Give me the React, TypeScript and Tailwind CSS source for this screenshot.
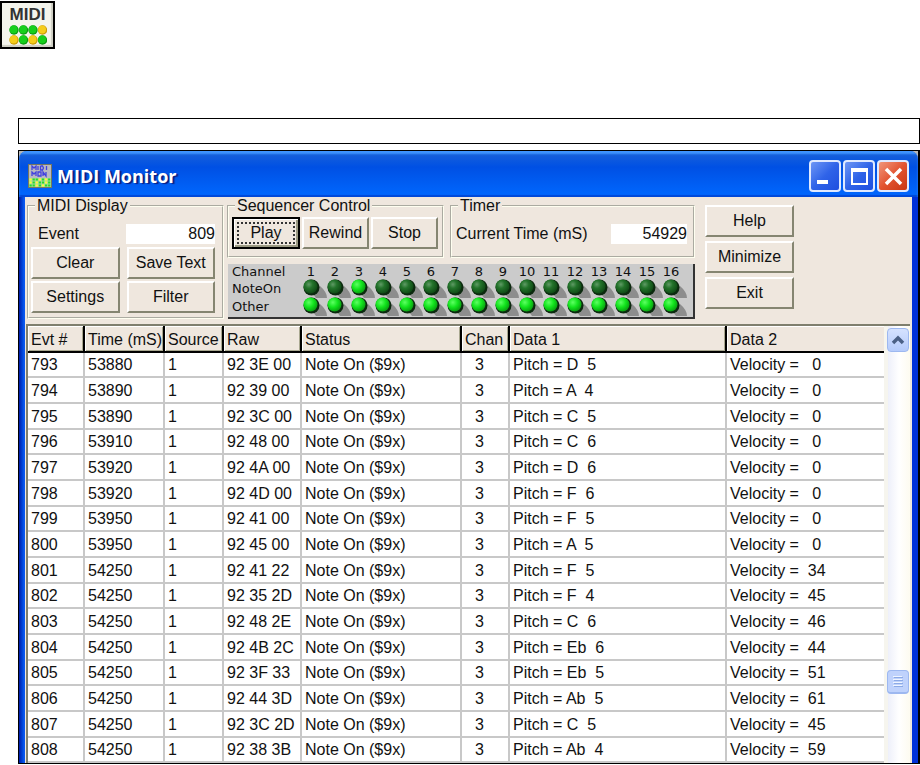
import React from "react";

type Row = [number, number, string, string, string];

const rows: Row[] = [
  [793, 53880, "92 3E 00", "D  5", "  0"],
  [794, 53890, "92 39 00", "A  4", "  0"],
  [795, 53890, "92 3C 00", "C  5", "  0"],
  [796, 53910, "92 48 00", "C  6", "  0"],
  [797, 53920, "92 4A 00", "D  6", "  0"],
  [798, 53920, "92 4D 00", "F  6", "  0"],
  [799, 53950, "92 41 00", "F  5", "  0"],
  [800, 53950, "92 45 00", "A  5", "  0"],
  [801, 54250, "92 41 22", "F  5", " 34"],
  [802, 54250, "92 35 2D", "F  4", " 45"],
  [803, 54250, "92 48 2E", "C  6", " 46"],
  [804, 54250, "92 4B 2C", "Eb  6", " 44"],
  [805, 54250, "92 3F 33", "Eb  5", " 51"],
  [806, 54250, "92 44 3D", "Ab  5", " 61"],
  [807, 54250, "92 3C 2D", "C  5", " 45"],
  [808, 54250, "92 38 3B", "Ab  4", " 59"],
];

const columns = [
  { label: "Evt #", width: "w-[57px]" },
  { label: "Time (mS)", width: "w-[80px]" },
  { label: "Source", width: "w-[59px]" },
  { label: "Raw", width: "w-[78px]" },
  { label: "Status", width: "w-[160px]" },
  { label: "Chan", width: "w-[48px]" },
  { label: "Data 1", width: "w-[217px]" },
  { label: "Data 2", width: "" },
];

const channels = Array.from({ length: 16 }, (_, i) => i + 1);

function PushButton({ children, className = "" }: { children: React.ReactNode; className?: string }) {
  return (
    <button
      type="button"
      className={`h-8 whitespace-nowrap border-2 border-b-[#858571] border-l-white border-r-[#858571] border-t-white bg-[#efe7de] text-center leading-5 ${className}`}
    >
      {children}
    </button>
  );
}

function Group({ title, className, children }: { title: string; className: string; children: React.ReactNode }) {
  return (
    <fieldset className={`min-w-0 border-2 border-[#fffff0] [border-style:groove] ${className}`}>
      <legend className="ml-1.5 px-0.5 leading-4">{title}</legend>
      {children}
    </fieldset>
  );
}

function Led({ lit }: { lit: boolean }) {
  return (
    <svg viewBox="0 0 24 18" className="h-[18px] w-6 overflow-visible" aria-hidden="true">
      <path d="M14 0 L21 6 Q28 12 28 18 L17 18 Q14 13 8 13 Z" fill="#8d8d8d" />
      <circle cx="12.500" cy="7.500" r="8" fill="#0c2a0f" />
      <circle cx="11.500" cy="6.500" r="7" fill={lit ? "url(#led-on)" : "url(#led-off)"} />
    </svg>
  );
}

function LedPanel() {
  return (
    <div className="mt-1.5 ml-px flex h-[55px] flex-col border-b-2 border-r-2 border-b-[#333] border-r-[#333] bg-[#cbcbcb] font-['DejaVu_Sans','Liberation_Sans',sans-serif] text-[13px] font-medium">
      <svg className="absolute h-0 w-0" aria-hidden="true">
        <defs>
          <radialGradient id="led-on" cx="0.38" cy="0.35" r="0.7">
            <stop offset="0" stopColor="#5dff62" />
            <stop offset="0.5" stopColor="#12e41d" />
            <stop offset="1" stopColor="#08990f" />
          </radialGradient>
          <radialGradient id="led-off" cx="0.38" cy="0.35" r="0.7">
            <stop offset="0" stopColor="#5f9a65" />
            <stop offset="0.4" stopColor="#23732b" />
            <stop offset="1" stopColor="#0d4713" />
          </radialGradient>
        </defs>
      </svg>
      <div className="flex h-4 items-center leading-4">
        <span className="w-[71px] pl-1">Channel</span>
        {channels.map((c) => (
          <span key={c} className="w-6 text-center">{c}</span>
        ))}
      </div>
      <div className="flex h-[18px] items-center leading-4">
        <span className="w-[71px] pl-1">NoteOn</span>
        {channels.map((c) => (
          <Led key={c} lit={c === 3} />
        ))}
      </div>
      <div className="flex h-[18px] items-center leading-4">
        <span className="w-[71px] pl-1">Other</span>
        {channels.map((c) => (
          <Led key={c} lit />
        ))}
      </div>
    </div>
  );
}

function AppIcon() {
  const dots = ["g", "g", "g", "y", "y", "g", "y", "g"];
  return (
    <div className="mt-px flex h-12 w-[55px] flex-col items-center border-2 border-black bg-[#f4f4ec] pt-0.5 shadow-[inset_-2px_-2px_1px_#cfcfc4]">
      <span className="font-['Liberation_Sans',sans-serif] text-[17px] font-bold leading-5 text-[#333]">MIDI</span>
      <svg viewBox="0 0 38 20" className="h-5 w-[38px]" aria-hidden="true">
        {dots.map((d, i) => (
          <g key={i}>
            <circle cx={5 + (i % 4) * 9.5} cy={i < 4 ? 5 : 15} r="4.700" fill={d === "g" ? "#0a9a10" : "#c99a06"} />
            <circle cx={4.6 + (i % 4) * 9.5} cy={i < 4 ? 4.5 : 14.5} r="3.900" fill={d === "g" ? "#16cf1c" : "#f5cc1a"} />
          </g>
        ))}
      </svg>
    </div>
  );
}

function TitleIcon() {
  return (
    <svg viewBox="0 0 24 24" className="h-6 w-6" aria-hidden="true">
      <rect width="24" height="24" fill="#77775f" />
      <rect x="1" y="1" width="22" height="22" fill="#b9b9c2" />
      <path d="M4 6V2l2 2 2-2v4M10 2v4M12.500 2v4h2l1-2-1-2h-2M18.500 2v4M4 12V8l2 2 2-2v4M10 8h3v4h-3zM15 12V8l3 4V8" fill="none" stroke="#4141e0" strokeWidth="1.300" />
      <rect x="1" y="14" width="22" height="9" fill="#a8d69a" />
      {[0, 1, 2].map((r) =>
        [0, 1, 2, 3, 4, 5, 6].map((c) => (
          <rect key={`${r}-${c}`} x={1.5 + c * 3.1} y={14.5 + r * 3} width="2.200" height="2" fill={(r + c * 2) % 5 < 2 ? "#ffff35" : "#25dd2b"} />
        )),
      )}
    </svg>
  );
}

const captionButton = "flex h-8 w-8 items-center justify-center rounded border-2 border-[#dfe9ff] text-white";

function TitleBar() {
  return (
    <header className="flex h-[46px] items-center bg-linear-to-b from-[#1b62d8] via-[#0050e4] via-35% to-[#0068ff] pl-[9px] pr-[9px] pt-1 shadow-[inset_0_3px_2px_#3f94ff,inset_0_-2px_1px_#0048d8]">
      <TitleIcon />
      <h1 className="ml-[5px] flex-1 font-['Open_Sans','Noto_Sans',sans-serif] text-lg font-bold text-white [text-shadow:2px_1px_1px_#0a1f80]">
        MIDI Monitor
      </h1>
      <div className="flex gap-0.5">
        <button type="button" aria-label="Minimize window" className={`${captionButton} bg-linear-to-br from-[#6d95f5] via-[#2f63e8] to-[#1f4fe0]`}>
          <svg viewBox="0 0 28 28" className="h-7 w-7"><rect x="6" y="18" width="11" height="4" fill="currentColor" /></svg>
        </button>
        <button type="button" aria-label="Maximize window" className={`${captionButton} bg-linear-to-br from-[#6d95f5] via-[#2f63e8] to-[#1f4fe0]`}>
          <svg viewBox="0 0 28 28" className="h-7 w-7"><path d="M6 6h17v17H6zM8 10v11h13V10z" fillRule="evenodd" fill="currentColor" /></svg>
        </button>
        <button type="button" aria-label="Close window" className={`${captionButton} bg-linear-to-br from-[#f0957a] via-[#e2532f] to-[#c93510]`}>
          <svg viewBox="0 0 28 28" className="h-7 w-7"><path d="M7 7L22 22M22 7L7 22" stroke="currentColor" strokeWidth="3.500" /></svg>
        </button>
      </div>
    </header>
  );
}

function ScrollBar() {
  return (
    <div className="flex w-[26px] shrink-0 flex-col items-center border-l-4 border-[#f6f5ee] bg-linear-to-r from-[#eef0fa] via-white to-[#fdfbf0] pt-0.5">
      <button type="button" aria-label="Scroll up" className="-ml-0.5 flex h-6 w-[22px] items-center justify-center rounded-sm border border-[#9db8f0] bg-linear-to-b from-[#d5e2ff] to-[#b5cbfb]">
        <svg viewBox="0 0 16 16" className="h-4 w-4"><path d="M3 11L8 6L13 11" fill="none" stroke="#4a6086" strokeWidth="3.500" /></svg>
      </button>
      <div className="flex-1" />
      <div className="-ml-0.5 mb-[69px] flex h-6 w-[22px] items-center justify-center rounded-sm border border-b-2 border-[#9db8f0] bg-[#bfd2fc]">
        <svg viewBox="0 0 12 13" className="h-[13px] w-3">
          <path d="M1 1.500h9M1 4.500h9M1 7.500h9M1 10.500h9" stroke="#eef4ff" />
          <path d="M2 2.500h9M2 5.500h9M2 8.500h9M2 11.500h9" stroke="#8caae6" />
        </svg>
      </div>
    </div>
  );
}

const lastCell = "overflow-hidden border-b-2 border-[#c8c8c8] pb-0 pl-[3px] pr-0 pt-px leading-5";
const cell = `${lastCell} border-r-2`;

function EventTable() {
  return (
    <div className="ml-px mr-0.5 flex border-l-2 border-t-2 border-[#7f7f6e] bg-white">
      <table className="min-w-0 flex-1 table-fixed border-separate border-spacing-0 whitespace-pre">
        <thead>
          <tr className="h-[27px]">
            {columns.map((c, i) => (
              <th
                key={c.label}
                scope="col"
                className={`${c.width} overflow-hidden border-b-2 border-black bg-[#efe7de] pb-0 pl-[3px] pr-0 pt-0.5 text-left font-normal leading-5 ${i < 7 ? "border-r-2 shadow-[inset_1px_1px_0_#fff,inset_-1px_-1px_0_#a9a890]" : "shadow-[inset_1px_1px_0_#fff]"}`}
              >
                {c.label}
              </th>
            ))}
          </tr>
        </thead>
        <tbody>
          {rows.map(([evt, time, raw, pitch, velocity], i) => (
            <tr key={evt} className={i % 3 === 0 ? "h-[25px]" : "h-[26px]"}>
              <td className={cell}>{evt}</td>
              <td className={cell}>{time}</td>
              <td className={cell}>1</td>
              <td className={cell}>{raw}</td>
              <td className={cell}>Note On ($9x)</td>
              <td className={`${cell} pl-[13px]`}>3</td>
              <td className={cell}>{`Pitch = ${pitch}`}</td>
              <td className={lastCell}>{`Velocity = ${velocity}`}</td>
            </tr>
          ))}
        </tbody>
      </table>
      <ScrollBar />
    </div>
  );
}

export default function App() {
  return (
    <div className="bg-white font-['Liberation_Sans',Arial,sans-serif] text-base text-[#111]">
      <div className="flow-root">
        <AppIcon />
      </div>
      <div className="ml-[18px] mt-[69px] h-[26px] border border-black" />
      <main className="ml-[18px] mt-1.5 border border-r-2 border-black bg-[#b8b8b8]">
        <div className="overflow-hidden rounded-t-lg">
          <TitleBar />
          <div className="bg-linear-to-r from-[#0018a8] via-[#0a58f0] via-[5px] to-[#0a58f0] pl-1.5">
            <div className="border-r-[6px] border-[#0030d8] bg-[#efe7de]">
              <div className="flex h-[127px] items-start pl-0.5 pt-px">
                <Group title="MIDI Display" className="h-[121px] w-[197px] shrink-0">
                  <div className="flex flex-col px-0.5 pt-2.5">
                    <div className="flex h-5 items-center justify-between pl-[7px] pr-[5px]">
                      <label htmlFor="event">Event</label>
                      <input id="event" readOnly value="809" className="h-5 w-[89px] bg-white text-right outline-none" />
                    </div>
                    <div className="mt-[3px] grid grid-cols-2 gap-x-[7px] gap-y-0.5 pr-[5px]">
                      <PushButton>Clear</PushButton>
                      <PushButton>Save Text</PushButton>
                      <PushButton>Settings</PushButton>
                      <PushButton>Filter</PushButton>
                    </div>
                  </div>
                </Group>
                <div className="ml-[3px] w-[468px] shrink-0">
                  <div className="flex gap-1.5">
                    <Group title="Sequencer Control" className="h-[60px] w-[217px] shrink-0">
                      <div className="flex gap-0.5 px-[3px] pt-[3px]">
                        <button type="button" className="h-8 w-[68px] border-2 border-black bg-[#efe7de] p-[3px] leading-[18px] shadow-[inset_1px_1px_0_#fff,inset_-2px_-2px_0_#9a9982]">
                          <span className="block border-2 border-dotted border-[#333]">Play</span>
                        </button>
                        <PushButton className="w-[67px]">Rewind</PushButton>
                        <PushButton className="w-[67px]">Stop</PushButton>
                      </div>
                    </Group>
                    <Group title="Timer" className="h-[60px] min-w-0 flex-1">
                      <div className="mt-2.5 flex h-5 items-center justify-between pl-1 pr-1.5">
                        <label htmlFor="timer">Current Time (mS)</label>
                        <input id="timer" readOnly value="54929" className="h-5 w-[76px] bg-white text-right outline-none" />
                      </div>
                    </Group>
                  </div>
                  <LedPanel />
                </div>
                <div className="ml-2.5 mt-[7px] flex w-[89px] flex-col gap-1">
                  <PushButton>Help</PushButton>
                  <PushButton>Minimize</PushButton>
                  <PushButton>Exit</PushButton>
                </div>
              </div>
              <EventTable />
            </div>
          </div>
        </div>
      </main>
    </div>
  );
}
